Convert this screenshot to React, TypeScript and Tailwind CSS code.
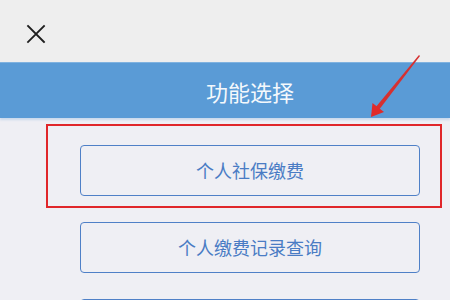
const font = {
  fontFamily: '"Noto Sans CJK SC", "Noto Sans", sans-serif',
};

function CloseIcon() {
  return (
    <svg width="20" height="20" viewBox="0 0 20 20" className="block">
      <path
        d="M2 2 L18 18 M18 2 L2 18"
        stroke="#1f1f1f"
        strokeWidth="1.8"
        strokeLinecap="square"
        fill="none"
      />
    </svg>
  );
}

// third button's label sits below the visible area, so it's left blank
const items = ["个人社保缴费", "个人缴费记录查询", ""];

export default function App() {
  return (
    <div
      className="relative h-[300px] w-[450px] overflow-hidden bg-[#efeff4]"
      style={font}
    >
      {/* top nav */}
      <div className="flex h-[62px] items-center bg-[#eeeeee] pl-[26px] pt-[6px]">
        <CloseIcon />
      </div>

      {/* title bar */}
      <div className="flex h-[56px] items-center justify-center border-t border-[#7fb2e0] bg-[#5a9bd6] pl-[50px] shadow-[0_2px_2px_rgba(90,155,214,0.25)]">
        <span className="text-[22px] leading-none text-[#f4f8fc]">功能选择</span>
      </div>

      {/* buttons */}
      <div className="flex flex-col gap-[26px] pl-[80px] pt-[27px]">
        {items.map((label, i) => (
          <div
            key={i}
            className="flex h-[51px] w-[340px] items-center justify-center rounded-[4px] border-[1.5px] border-[#4f80c7] text-[18px] text-[#4a7cc4]"
          >
            {label}
          </div>
        ))}
      </div>

      {/* red annotation box */}
      <div className="absolute left-[46px] top-[124px] h-[84px] w-[396px] border-2 border-[#e0262a]" />

      {/* red arrow */}
      <svg
        className="absolute left-0 top-0"
        width="450"
        height="300"
        viewBox="0 0 450 300"
      >
        <path d="M419 55 L420 56 L378.5 110.5 L375 108 Z" fill="#d63030" />
        <path d="M371 117 L372.5 103 L384 112 Z" fill="#e02a2a" />
      </svg>
    </div>
  );
}
